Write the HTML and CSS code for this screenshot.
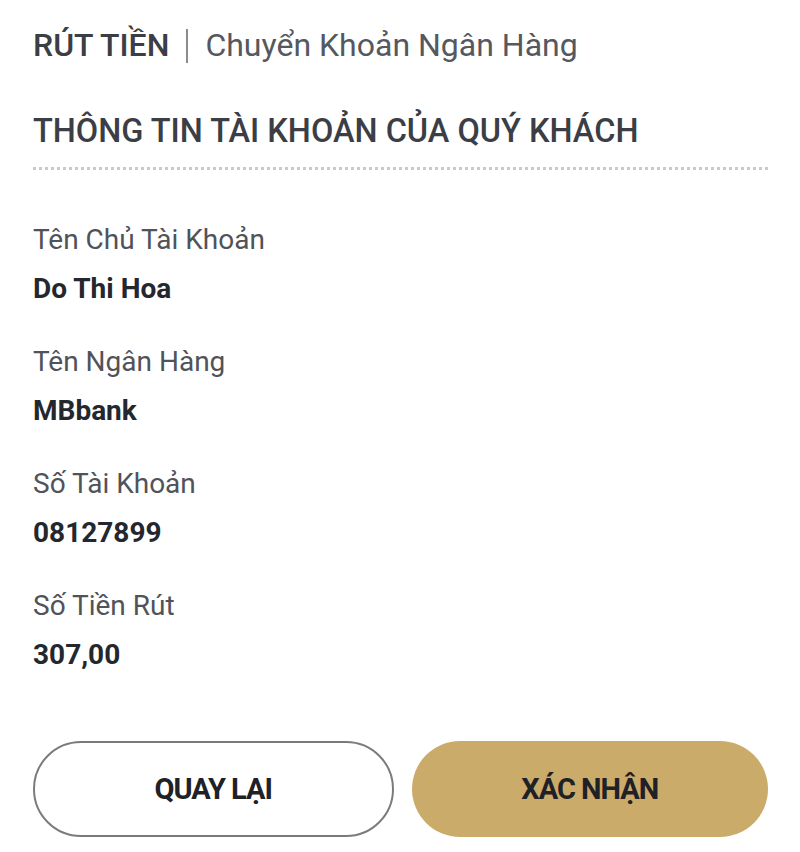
FILE: index.html
```html
<!DOCTYPE html>
<html lang="vi">
<head>
    <meta charset="UTF-8">
    <meta name="viewport" content="width=device-width, initial-scale=1.0">
    <title>Rút Tiền</title>
    <link rel="stylesheet" href="styles.css">
</head>
<body>
    <div class="withdraw-container">
        <h1 class="page-title">
            <span class="title-main">RÚT TIỀN</span>
            <span class="title-sep"></span>
            <span class="title-sub">Chuyển Khoản Ngân Hàng</span>
        </h1>

        <h2 class="section-title">THÔNG TIN TÀI KHOẢN CỦA QUÝ KHÁCH</h2>

        <div class="info-list">
            <div class="info-item">
                <p class="info-label">Tên Chủ Tài Khoản</p>
                <p class="info-value">Do Thi Hoa</p>
            </div>
            <div class="info-item">
                <p class="info-label">Tên Ngân Hàng</p>
                <p class="info-value">MBbank</p>
            </div>
            <div class="info-item">
                <p class="info-label">Số Tài Khoản</p>
                <p class="info-value">08127899</p>
            </div>
            <div class="info-item">
                <p class="info-label">Số Tiền Rút</p>
                <p class="info-value">307,00</p>
            </div>
        </div>

        <div class="actions">
            <button type="button" class="btn btn-back">QUAY LẠI</button>
            <button type="button" class="btn btn-confirm">XÁC NHẬN</button>
        </div>
    </div>
</body>
</html>
```

FILE: styles.css
```css
body {
    margin: 0;
    font-family: Roboto, "Noto Sans", Arial, sans-serif;
    background-color: #fff;
    color: #33363c;
}

.withdraw-container {
    width: 735px;
    padding: 22px 0 0 33px;
}

.page-title {
    display: flex;
    align-items: center;
    margin: 0;
    height: 46px;
    font-size: 32px;
    font-weight: normal;
}

.title-main {
    font-weight: 500;
    color: #3b3e45;
}

.title-sep {
    width: 2px;
    height: 34px;
    background-color: #8a8c91;
    margin: 2px 17px 0 17px;
}

.title-sub {
    color: #55585e;
}

.section-title {
    margin: 43px 0 0 0;
    padding-bottom: 16px;
    font-size: 32.5px;
    line-height: 40px;
    font-weight: 500;
    color: #3b3e45;
    border-bottom: 3px dotted #c9cacc;
}

.info-list {
    padding-top: 52px;
}

.info-item {
    margin-bottom: 37px;
}

.info-label {
    margin: 0;
    font-size: 28px;
    line-height: 36px;
    color: #505359;
}

.info-value {
    margin: 13px 0 0 0;
    font-size: 28px;
    line-height: 36px;
    font-weight: bold;
    color: #24272d;
}

.actions {
    display: flex;
    gap: 18px;
    margin-top: 68px;
}

.btn {
    flex: 1;
    height: 96px;
    border-radius: 48px;
    font-family: Roboto, Arial, sans-serif;
    font-size: 29px;
    font-weight: bold;
    letter-spacing: -1px;
    color: #1f2126;
    cursor: pointer;
}

.btn-back {
    background-color: #fff;
    border: 2px solid #7a7b7e;
}

.btn-confirm {
    background-color: #cbab69;
    border: none;
}
```
